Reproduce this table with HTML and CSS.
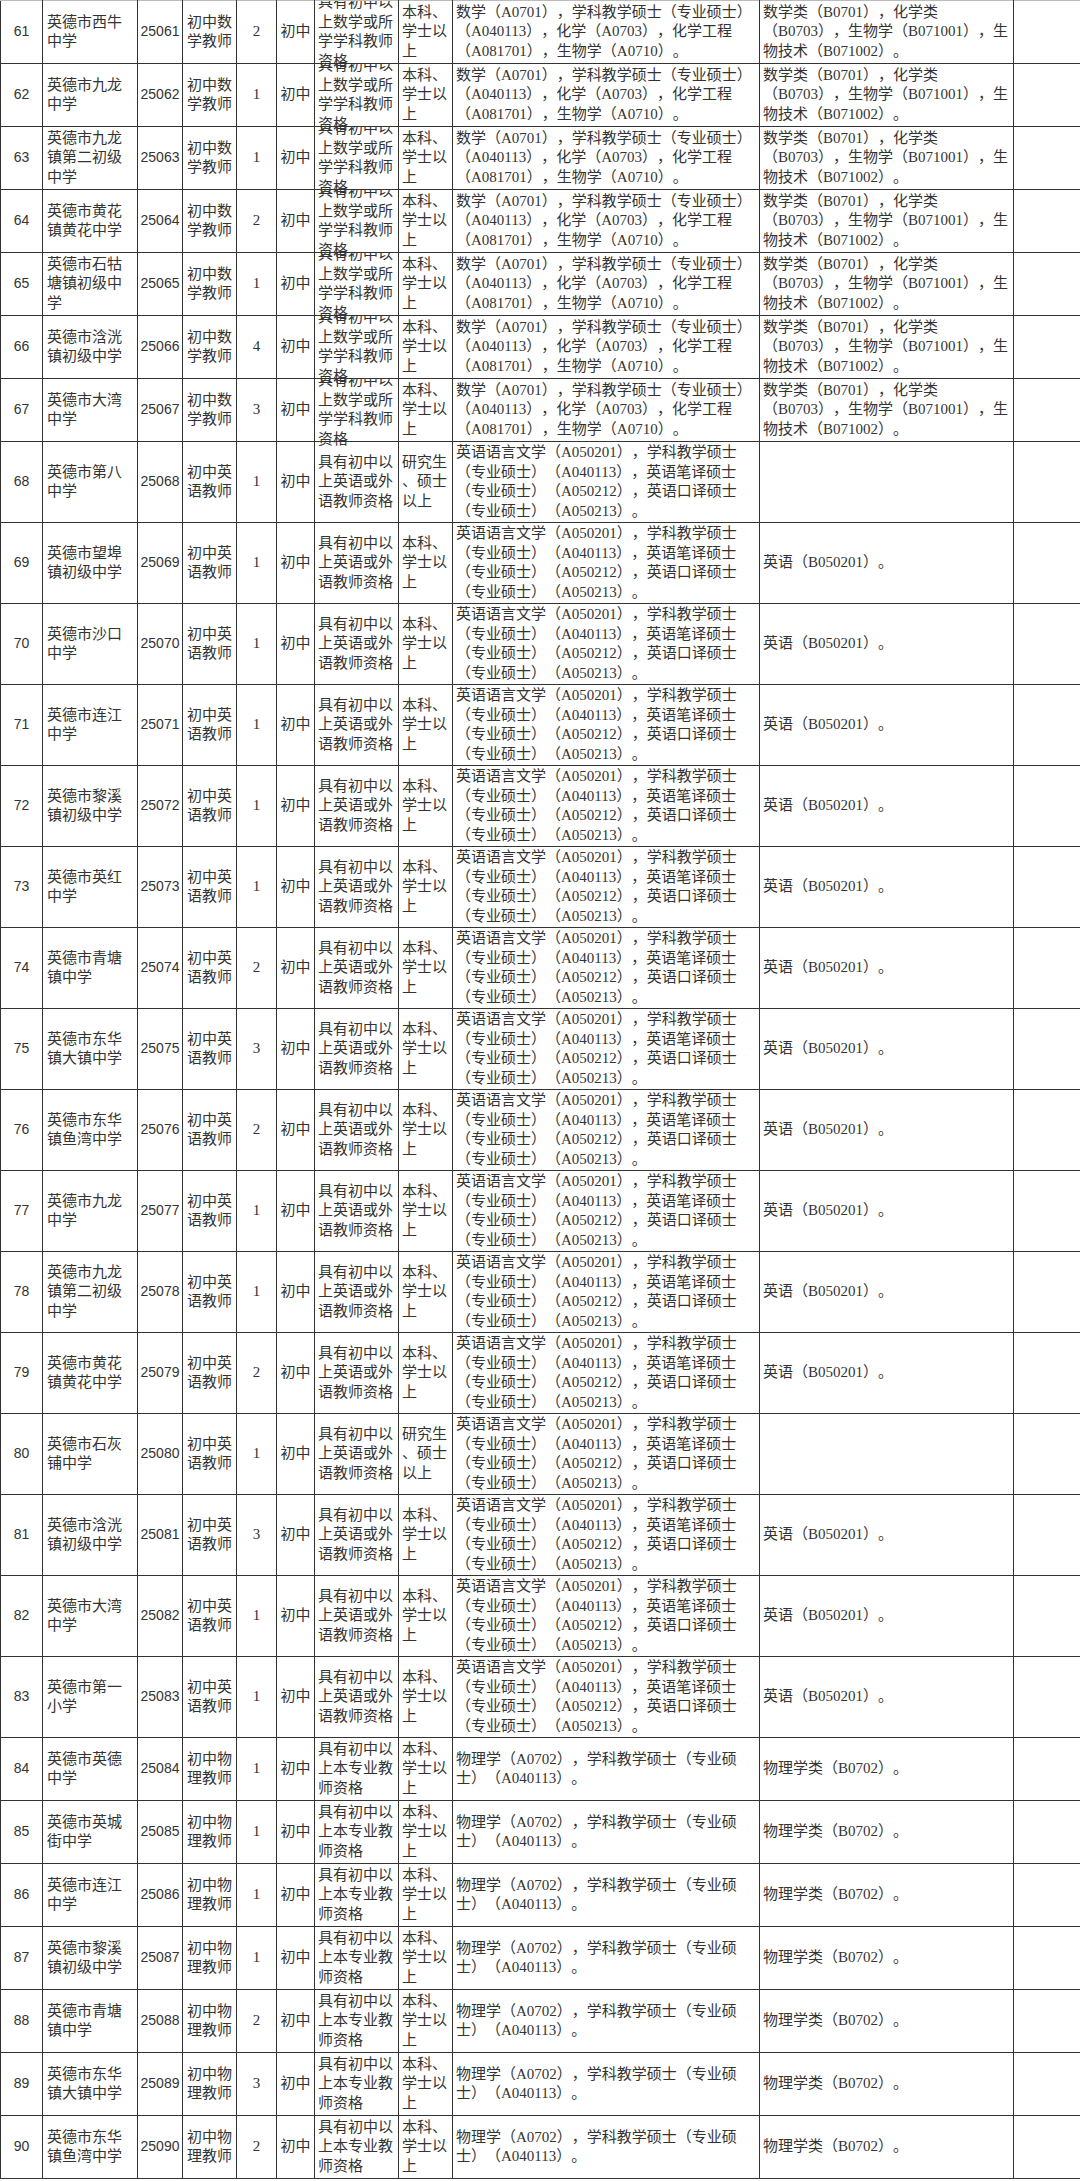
FILE: index.html
```html
<!DOCTYPE html>
<html lang="zh-CN">
<head>
<meta charset="utf-8">
<title>英德市教师招聘岗位表</title>
<link rel="stylesheet" href="styles.css">
</head>
<body>
<table class="grid">
<colgroup>
<col class="w-no"><col class="w-unit"><col class="w-code"><col class="w-job"><col class="w-cnt"><col class="w-lvl"><col class="w-qual"><col class="w-edu"><col class="w-maj"><col class="w-bmaj"><col class="w-rest">
</colgroup>
<tbody>
<tr class="m"><td class="no">61</td><td class="unit">英德市西牛<br>中学</td><td class="code">25061</td><td class="job">初中数<br>学教师</td><td class="cnt">2</td><td class="lvl">初中</td><td class="qual"><div class="ov"><div>具有初中以<br>上数学或所<br>学学科教师<br>资格</div></div></td><td class="edu">本科、<br>学士以<br>上</td><td class="maj">数学（A0701），学科教学硕士（专业硕士）<br>（A040113），化学（A0703），化学工程<br>（A081701），生物学（A0710）。</td><td class="bmaj">数学类（B0701），化学类<br>（B0703），生物学（B071001），生<br>物技术（B071002）。</td><td class="rest"></td></tr>
<tr class="m"><td class="no">62</td><td class="unit">英德市九龙<br>中学</td><td class="code">25062</td><td class="job">初中数<br>学教师</td><td class="cnt">1</td><td class="lvl">初中</td><td class="qual"><div class="ov"><div>具有初中以<br>上数学或所<br>学学科教师<br>资格</div></div></td><td class="edu">本科、<br>学士以<br>上</td><td class="maj">数学（A0701），学科教学硕士（专业硕士）<br>（A040113），化学（A0703），化学工程<br>（A081701），生物学（A0710）。</td><td class="bmaj">数学类（B0701），化学类<br>（B0703），生物学（B071001），生<br>物技术（B071002）。</td><td class="rest"></td></tr>
<tr class="m"><td class="no">63</td><td class="unit">英德市九龙<br>镇第二初级<br>中学</td><td class="code">25063</td><td class="job">初中数<br>学教师</td><td class="cnt">1</td><td class="lvl">初中</td><td class="qual"><div class="ov"><div>具有初中以<br>上数学或所<br>学学科教师<br>资格</div></div></td><td class="edu">本科、<br>学士以<br>上</td><td class="maj">数学（A0701），学科教学硕士（专业硕士）<br>（A040113），化学（A0703），化学工程<br>（A081701），生物学（A0710）。</td><td class="bmaj">数学类（B0701），化学类<br>（B0703），生物学（B071001），生<br>物技术（B071002）。</td><td class="rest"></td></tr>
<tr class="m"><td class="no">64</td><td class="unit">英德市黄花<br>镇黄花中学</td><td class="code">25064</td><td class="job">初中数<br>学教师</td><td class="cnt">2</td><td class="lvl">初中</td><td class="qual"><div class="ov"><div>具有初中以<br>上数学或所<br>学学科教师<br>资格</div></div></td><td class="edu">本科、<br>学士以<br>上</td><td class="maj">数学（A0701），学科教学硕士（专业硕士）<br>（A040113），化学（A0703），化学工程<br>（A081701），生物学（A0710）。</td><td class="bmaj">数学类（B0701），化学类<br>（B0703），生物学（B071001），生<br>物技术（B071002）。</td><td class="rest"></td></tr>
<tr class="m"><td class="no">65</td><td class="unit">英德市石牯<br>塘镇初级中<br>学</td><td class="code">25065</td><td class="job">初中数<br>学教师</td><td class="cnt">1</td><td class="lvl">初中</td><td class="qual"><div class="ov"><div>具有初中以<br>上数学或所<br>学学科教师<br>资格</div></div></td><td class="edu">本科、<br>学士以<br>上</td><td class="maj">数学（A0701），学科教学硕士（专业硕士）<br>（A040113），化学（A0703），化学工程<br>（A081701），生物学（A0710）。</td><td class="bmaj">数学类（B0701），化学类<br>（B0703），生物学（B071001），生<br>物技术（B071002）。</td><td class="rest"></td></tr>
<tr class="m"><td class="no">66</td><td class="unit">英德市浛洸<br>镇初级中学</td><td class="code">25066</td><td class="job">初中数<br>学教师</td><td class="cnt">4</td><td class="lvl">初中</td><td class="qual"><div class="ov"><div>具有初中以<br>上数学或所<br>学学科教师<br>资格</div></div></td><td class="edu">本科、<br>学士以<br>上</td><td class="maj">数学（A0701），学科教学硕士（专业硕士）<br>（A040113），化学（A0703），化学工程<br>（A081701），生物学（A0710）。</td><td class="bmaj">数学类（B0701），化学类<br>（B0703），生物学（B071001），生<br>物技术（B071002）。</td><td class="rest"></td></tr>
<tr class="m"><td class="no">67</td><td class="unit">英德市大湾<br>中学</td><td class="code">25067</td><td class="job">初中数<br>学教师</td><td class="cnt">3</td><td class="lvl">初中</td><td class="qual"><div class="ov"><div>具有初中以<br>上数学或所<br>学学科教师<br>资格</div></div></td><td class="edu">本科、<br>学士以<br>上</td><td class="maj">数学（A0701），学科教学硕士（专业硕士）<br>（A040113），化学（A0703），化学工程<br>（A081701），生物学（A0710）。</td><td class="bmaj">数学类（B0701），化学类<br>（B0703），生物学（B071001），生<br>物技术（B071002）。</td><td class="rest"></td></tr>

<tr class="e"><td class="no">68</td><td class="unit">英德市第八<br>中学</td><td class="code">25068</td><td class="job">初中英<br>语教师</td><td class="cnt">1</td><td class="lvl">初中</td><td class="qual">具有初中以<br>上英语或外<br>语教师资格</td><td class="edu">研究生<br>、硕士<br>以上</td><td class="maj">英语语言文学（A050201），学科教学硕士<br>（专业硕士）（A040113），英语笔译硕士<br>（专业硕士）（A050212），英语口译硕士<br>（专业硕士）（A050213）。</td><td class="bmaj"></td><td class="rest"></td></tr>
<tr class="e"><td class="no">69</td><td class="unit">英德市望埠<br>镇初级中学</td><td class="code">25069</td><td class="job">初中英<br>语教师</td><td class="cnt">1</td><td class="lvl">初中</td><td class="qual">具有初中以<br>上英语或外<br>语教师资格</td><td class="edu">本科、<br>学士以<br>上</td><td class="maj">英语语言文学（A050201），学科教学硕士<br>（专业硕士）（A040113），英语笔译硕士<br>（专业硕士）（A050212），英语口译硕士<br>（专业硕士）（A050213）。</td><td class="bmaj">英语（B050201）。</td><td class="rest"></td></tr>
<tr class="e"><td class="no">70</td><td class="unit">英德市沙口<br>中学</td><td class="code">25070</td><td class="job">初中英<br>语教师</td><td class="cnt">1</td><td class="lvl">初中</td><td class="qual">具有初中以<br>上英语或外<br>语教师资格</td><td class="edu">本科、<br>学士以<br>上</td><td class="maj">英语语言文学（A050201），学科教学硕士<br>（专业硕士）（A040113），英语笔译硕士<br>（专业硕士）（A050212），英语口译硕士<br>（专业硕士）（A050213）。</td><td class="bmaj">英语（B050201）。</td><td class="rest"></td></tr>
<tr class="e"><td class="no">71</td><td class="unit">英德市连江<br>中学</td><td class="code">25071</td><td class="job">初中英<br>语教师</td><td class="cnt">1</td><td class="lvl">初中</td><td class="qual">具有初中以<br>上英语或外<br>语教师资格</td><td class="edu">本科、<br>学士以<br>上</td><td class="maj">英语语言文学（A050201），学科教学硕士<br>（专业硕士）（A040113），英语笔译硕士<br>（专业硕士）（A050212），英语口译硕士<br>（专业硕士）（A050213）。</td><td class="bmaj">英语（B050201）。</td><td class="rest"></td></tr>
<tr class="e"><td class="no">72</td><td class="unit">英德市黎溪<br>镇初级中学</td><td class="code">25072</td><td class="job">初中英<br>语教师</td><td class="cnt">1</td><td class="lvl">初中</td><td class="qual">具有初中以<br>上英语或外<br>语教师资格</td><td class="edu">本科、<br>学士以<br>上</td><td class="maj">英语语言文学（A050201），学科教学硕士<br>（专业硕士）（A040113），英语笔译硕士<br>（专业硕士）（A050212），英语口译硕士<br>（专业硕士）（A050213）。</td><td class="bmaj">英语（B050201）。</td><td class="rest"></td></tr>
<tr class="e"><td class="no">73</td><td class="unit">英德市英红<br>中学</td><td class="code">25073</td><td class="job">初中英<br>语教师</td><td class="cnt">1</td><td class="lvl">初中</td><td class="qual">具有初中以<br>上英语或外<br>语教师资格</td><td class="edu">本科、<br>学士以<br>上</td><td class="maj">英语语言文学（A050201），学科教学硕士<br>（专业硕士）（A040113），英语笔译硕士<br>（专业硕士）（A050212），英语口译硕士<br>（专业硕士）（A050213）。</td><td class="bmaj">英语（B050201）。</td><td class="rest"></td></tr>
<tr class="e"><td class="no">74</td><td class="unit">英德市青塘<br>镇中学</td><td class="code">25074</td><td class="job">初中英<br>语教师</td><td class="cnt">2</td><td class="lvl">初中</td><td class="qual">具有初中以<br>上英语或外<br>语教师资格</td><td class="edu">本科、<br>学士以<br>上</td><td class="maj">英语语言文学（A050201），学科教学硕士<br>（专业硕士）（A040113），英语笔译硕士<br>（专业硕士）（A050212），英语口译硕士<br>（专业硕士）（A050213）。</td><td class="bmaj">英语（B050201）。</td><td class="rest"></td></tr>
<tr class="e"><td class="no">75</td><td class="unit">英德市东华<br>镇大镇中学</td><td class="code">25075</td><td class="job">初中英<br>语教师</td><td class="cnt">3</td><td class="lvl">初中</td><td class="qual">具有初中以<br>上英语或外<br>语教师资格</td><td class="edu">本科、<br>学士以<br>上</td><td class="maj">英语语言文学（A050201），学科教学硕士<br>（专业硕士）（A040113），英语笔译硕士<br>（专业硕士）（A050212），英语口译硕士<br>（专业硕士）（A050213）。</td><td class="bmaj">英语（B050201）。</td><td class="rest"></td></tr>
<tr class="e"><td class="no">76</td><td class="unit">英德市东华<br>镇鱼湾中学</td><td class="code">25076</td><td class="job">初中英<br>语教师</td><td class="cnt">2</td><td class="lvl">初中</td><td class="qual">具有初中以<br>上英语或外<br>语教师资格</td><td class="edu">本科、<br>学士以<br>上</td><td class="maj">英语语言文学（A050201），学科教学硕士<br>（专业硕士）（A040113），英语笔译硕士<br>（专业硕士）（A050212），英语口译硕士<br>（专业硕士）（A050213）。</td><td class="bmaj">英语（B050201）。</td><td class="rest"></td></tr>
<tr class="e"><td class="no">77</td><td class="unit">英德市九龙<br>中学</td><td class="code">25077</td><td class="job">初中英<br>语教师</td><td class="cnt">1</td><td class="lvl">初中</td><td class="qual">具有初中以<br>上英语或外<br>语教师资格</td><td class="edu">本科、<br>学士以<br>上</td><td class="maj">英语语言文学（A050201），学科教学硕士<br>（专业硕士）（A040113），英语笔译硕士<br>（专业硕士）（A050212），英语口译硕士<br>（专业硕士）（A050213）。</td><td class="bmaj">英语（B050201）。</td><td class="rest"></td></tr>
<tr class="e"><td class="no">78</td><td class="unit">英德市九龙<br>镇第二初级<br>中学</td><td class="code">25078</td><td class="job">初中英<br>语教师</td><td class="cnt">1</td><td class="lvl">初中</td><td class="qual">具有初中以<br>上英语或外<br>语教师资格</td><td class="edu">本科、<br>学士以<br>上</td><td class="maj">英语语言文学（A050201），学科教学硕士<br>（专业硕士）（A040113），英语笔译硕士<br>（专业硕士）（A050212），英语口译硕士<br>（专业硕士）（A050213）。</td><td class="bmaj">英语（B050201）。</td><td class="rest"></td></tr>
<tr class="e"><td class="no">79</td><td class="unit">英德市黄花<br>镇黄花中学</td><td class="code">25079</td><td class="job">初中英<br>语教师</td><td class="cnt">2</td><td class="lvl">初中</td><td class="qual">具有初中以<br>上英语或外<br>语教师资格</td><td class="edu">本科、<br>学士以<br>上</td><td class="maj">英语语言文学（A050201），学科教学硕士<br>（专业硕士）（A040113），英语笔译硕士<br>（专业硕士）（A050212），英语口译硕士<br>（专业硕士）（A050213）。</td><td class="bmaj">英语（B050201）。</td><td class="rest"></td></tr>
<tr class="e"><td class="no">80</td><td class="unit">英德市石灰<br>铺中学</td><td class="code">25080</td><td class="job">初中英<br>语教师</td><td class="cnt">1</td><td class="lvl">初中</td><td class="qual">具有初中以<br>上英语或外<br>语教师资格</td><td class="edu">研究生<br>、硕士<br>以上</td><td class="maj">英语语言文学（A050201），学科教学硕士<br>（专业硕士）（A040113），英语笔译硕士<br>（专业硕士）（A050212），英语口译硕士<br>（专业硕士）（A050213）。</td><td class="bmaj"></td><td class="rest"></td></tr>
<tr class="e"><td class="no">81</td><td class="unit">英德市浛洸<br>镇初级中学</td><td class="code">25081</td><td class="job">初中英<br>语教师</td><td class="cnt">3</td><td class="lvl">初中</td><td class="qual">具有初中以<br>上英语或外<br>语教师资格</td><td class="edu">本科、<br>学士以<br>上</td><td class="maj">英语语言文学（A050201），学科教学硕士<br>（专业硕士）（A040113），英语笔译硕士<br>（专业硕士）（A050212），英语口译硕士<br>（专业硕士）（A050213）。</td><td class="bmaj">英语（B050201）。</td><td class="rest"></td></tr>
<tr class="e"><td class="no">82</td><td class="unit">英德市大湾<br>中学</td><td class="code">25082</td><td class="job">初中英<br>语教师</td><td class="cnt">1</td><td class="lvl">初中</td><td class="qual">具有初中以<br>上英语或外<br>语教师资格</td><td class="edu">本科、<br>学士以<br>上</td><td class="maj">英语语言文学（A050201），学科教学硕士<br>（专业硕士）（A040113），英语笔译硕士<br>（专业硕士）（A050212），英语口译硕士<br>（专业硕士）（A050213）。</td><td class="bmaj">英语（B050201）。</td><td class="rest"></td></tr>
<tr class="e"><td class="no">83</td><td class="unit">英德市第一<br>小学</td><td class="code">25083</td><td class="job">初中英<br>语教师</td><td class="cnt">1</td><td class="lvl">初中</td><td class="qual">具有初中以<br>上英语或外<br>语教师资格</td><td class="edu">本科、<br>学士以<br>上</td><td class="maj">英语语言文学（A050201），学科教学硕士<br>（专业硕士）（A040113），英语笔译硕士<br>（专业硕士）（A050212），英语口译硕士<br>（专业硕士）（A050213）。</td><td class="bmaj">英语（B050201）。</td><td class="rest"></td></tr>

<tr class="p"><td class="no">84</td><td class="unit">英德市英德<br>中学</td><td class="code">25084</td><td class="job">初中物<br>理教师</td><td class="cnt">1</td><td class="lvl">初中</td><td class="qual">具有初中以<br>上本专业教<br>师资格</td><td class="edu">本科、<br>学士以<br>上</td><td class="maj">物理学（A0702），学科教学硕士（专业硕<br>士）（A040113）。</td><td class="bmaj">物理学类（B0702）。</td><td class="rest"></td></tr>
<tr class="p"><td class="no">85</td><td class="unit">英德市英城<br>街中学</td><td class="code">25085</td><td class="job">初中物<br>理教师</td><td class="cnt">1</td><td class="lvl">初中</td><td class="qual">具有初中以<br>上本专业教<br>师资格</td><td class="edu">本科、<br>学士以<br>上</td><td class="maj">物理学（A0702），学科教学硕士（专业硕<br>士）（A040113）。</td><td class="bmaj">物理学类（B0702）。</td><td class="rest"></td></tr>
<tr class="p"><td class="no">86</td><td class="unit">英德市连江<br>中学</td><td class="code">25086</td><td class="job">初中物<br>理教师</td><td class="cnt">1</td><td class="lvl">初中</td><td class="qual">具有初中以<br>上本专业教<br>师资格</td><td class="edu">本科、<br>学士以<br>上</td><td class="maj">物理学（A0702），学科教学硕士（专业硕<br>士）（A040113）。</td><td class="bmaj">物理学类（B0702）。</td><td class="rest"></td></tr>
<tr class="p"><td class="no">87</td><td class="unit">英德市黎溪<br>镇初级中学</td><td class="code">25087</td><td class="job">初中物<br>理教师</td><td class="cnt">1</td><td class="lvl">初中</td><td class="qual">具有初中以<br>上本专业教<br>师资格</td><td class="edu">本科、<br>学士以<br>上</td><td class="maj">物理学（A0702），学科教学硕士（专业硕<br>士）（A040113）。</td><td class="bmaj">物理学类（B0702）。</td><td class="rest"></td></tr>
<tr class="p"><td class="no">88</td><td class="unit">英德市青塘<br>镇中学</td><td class="code">25088</td><td class="job">初中物<br>理教师</td><td class="cnt">2</td><td class="lvl">初中</td><td class="qual">具有初中以<br>上本专业教<br>师资格</td><td class="edu">本科、<br>学士以<br>上</td><td class="maj">物理学（A0702），学科教学硕士（专业硕<br>士）（A040113）。</td><td class="bmaj">物理学类（B0702）。</td><td class="rest"></td></tr>
<tr class="p"><td class="no">89</td><td class="unit">英德市东华<br>镇大镇中学</td><td class="code">25089</td><td class="job">初中物<br>理教师</td><td class="cnt">3</td><td class="lvl">初中</td><td class="qual">具有初中以<br>上本专业教<br>师资格</td><td class="edu">本科、<br>学士以<br>上</td><td class="maj">物理学（A0702），学科教学硕士（专业硕<br>士）（A040113）。</td><td class="bmaj">物理学类（B0702）。</td><td class="rest"></td></tr>
<tr class="p"><td class="no">90</td><td class="unit">英德市东华<br>镇鱼湾中学</td><td class="code">25090</td><td class="job">初中物<br>理教师</td><td class="cnt">2</td><td class="lvl">初中</td><td class="qual">具有初中以<br>上本专业教<br>师资格</td><td class="edu">本科、<br>学士以<br>上</td><td class="maj">物理学（A0702），学科教学硕士（专业硕<br>士）（A040113）。</td><td class="bmaj">物理学类（B0702）。</td><td class="rest"></td></tr>
</tbody>
</table>
</body>
</html>
```

FILE: styles.css
```css
html, body {
  margin: 0;
  padding: 0;
  background: #ffffff;
  overflow: hidden;
}

body {
  font-family: "Liberation Serif", "Noto Sans CJK SC", serif;
  font-size: 15px;
  line-height: 19.5px;
  color: #333333;
  text-spacing-trim: space-all;
}

.grid {
  border-collapse: collapse;
  table-layout: fixed;
  width: 1080px;
}

.w-no { width: 42px; }
.w-unit { width: 95px; }
.w-code { width: 45px; }
.w-job { width: 54px; }
.w-cnt { width: 40px; }
.w-lvl { width: 38px; }
.w-qual { width: 84px; }
.w-edu { width: 54px; }
.w-maj { width: 307px; }
.w-bmaj { width: 254px; }
.w-rest { width: 67px; }

.grid td {
  border: 1px solid #333333;
  padding: 0 0 0 3px;
  vertical-align: middle;
  white-space: nowrap;
  overflow: visible;
  text-align: left;
}

.grid tr:first-child td {
  border-top-color: #bbbbbb;
}

.grid td.rest {
  border-right: none;
}

.grid tr.m td,
.grid tr.p td {
  height: 62px;
}

.grid tr.e td {
  height: 80px;
}

.grid td.no,
.grid td.code {
  font-family: "Liberation Sans", "Noto Sans CJK SC", sans-serif;
  font-size: 14px;
  text-align: center;
  padding: 0;
}

.grid td.cnt,
.grid td.lvl {
  text-align: center;
  padding: 0;
}

.grid td.unit,
.grid td.job {
  padding-left: 4px;
}

.grid td.qual,
.grid td.maj,
.grid td.bmaj {
  padding-left: 3px;
}

.ov {
  height: 62px;
  display: flex;
  align-items: center;
  clip-path: inset(0 -4px -14px -4px);
}
```
